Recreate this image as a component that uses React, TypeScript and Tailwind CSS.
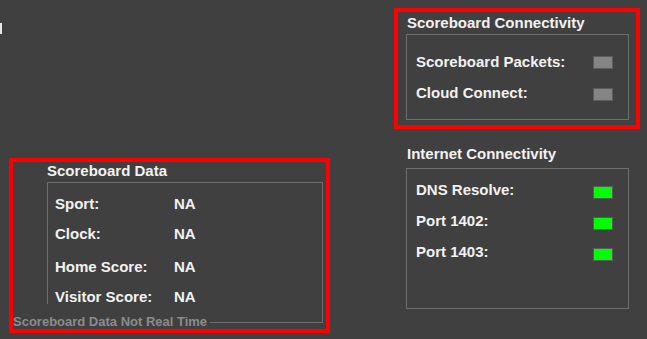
const font = { fontFamily: '"Liberation Sans", Arial, sans-serif' };

function Lamp({ on, top }: { on: boolean; top: string }) {
  return (
    <div
      className={
        "w-[20px] h-[13px] border border-[#5c5c5c] shrink-0 " +
        (on ? "bg-[#00ff00] " : "bg-[#858585] ") +
        top
      }
    />
  );
}

function StatusRow({ label, on, rowTop, lampTop }: { label: string; on: boolean; rowTop: string; lampTop: string }) {
  return (
    <div className={"flex items-start justify-between pl-[9px] pr-[15px] " + rowTop}>
      <span className="text-[15px] leading-[18px] font-bold text-[#f2f2f2]">{label}</span>
      <Lamp on={on} top={lampTop} />
    </div>
  );
}

function DataRow({ label, value, rowTop }: { label: string; value: string; rowTop: string }) {
  return (
    <div className={"flex pl-[7px] text-[15px] leading-[18px] font-bold text-[#f2f2f2] " + rowTop}>
      <span className="w-[119px]">{label}</span>
      <span>{value}</span>
    </div>
  );
}

export default function App() {
  return (
    <div className="w-[647px] h-[339px] bg-[#404040] flex overflow-hidden" style={font}>
      {/* left column */}
      <div className="w-[394px] shrink-0 flex flex-col">
        <div className="mt-[23px] w-[2px] h-[11px] bg-[#e6e6e6]" />
        <div className="ml-[9px] mt-[124px] w-[321px] h-[175px] border-4 border-[#ff0000] relative">
          <div className="pl-[34px] text-[15px] leading-[18px] font-bold text-[#f2f2f2]">Scoreboard Data</div>
          <div className="ml-[34px] mt-[2px] w-[276px] h-[141px] border border-[#6e6e6e]">
            <DataRow label="Sport:" value="NA" rowTop="mt-[12px]" />
            <DataRow label="Clock:" value="NA" rowTop="mt-[12px]" />
            <DataRow label="Home Score:" value="NA" rowTop="mt-[15px]" />
            <DataRow label="Visitor Score:" value="NA" rowTop="mt-[12px]" />
          </div>
          <div className="absolute left-0 bottom-0 w-[197px] h-[25px] bg-[#404040] flex items-end">
            <span className="text-[13px] leading-[15px] font-bold text-[#8c8c8c] whitespace-nowrap">
              Scoreboard Data Not Real Time
            </span>
          </div>
        </div>
      </div>

      {/* right column */}
      <div className="flex flex-col">
        <div className="mt-[8px] w-[246px] h-[121px] border-4 border-[#ff0000]">
          <div className="pl-[9px] mt-[2px] text-[15px] leading-[18px] font-bold text-[#f2f2f2]">Scoreboard Connectivity</div>
          <div className="ml-[8px] mt-[2px] w-[223px] h-[86px] border border-[#6e6e6e]">
            <StatusRow label="Scoreboard Packets:" on={false} rowTop="mt-[18px]" lampTop="mt-[3px]" />
            <StatusRow label="Cloud Connect:" on={false} rowTop="mt-[13px]" lampTop="mt-[4px]" />
          </div>
        </div>
        <div className="ml-[13px] mt-[16px] text-[15px] leading-[18px] font-bold text-[#f2f2f2]">Internet Connectivity</div>
        <div className="ml-[12px] mt-[5px] w-[223px] h-[141px] border border-[#6e6e6e]">
          <StatusRow label="DNS Resolve:" on rowTop="mt-[12px]" lampTop="mt-[5px]" />
          <StatusRow label="Port 1402:" on rowTop="mt-[13px]" lampTop="mt-[5px]" />
          <StatusRow label="Port 1403:" on rowTop="mt-[13px]" lampTop="mt-[5px]" />
        </div>
      </div>
    </div>
  );
}
